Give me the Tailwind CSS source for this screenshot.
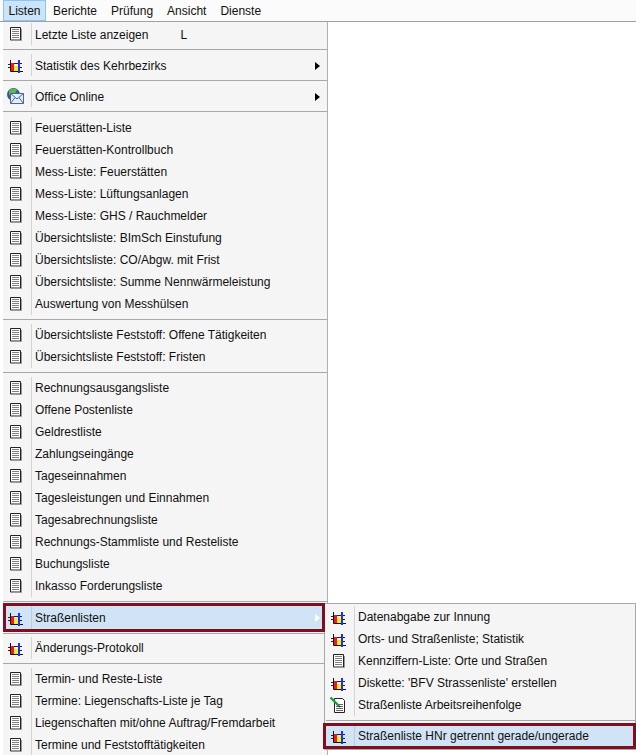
<!DOCTYPE html>
<html lang="de">
<head>
    <meta charset="UTF-8">
    <script src="https://cdn.jsdelivr.net/npm/@tailwindcss/browser@4"></script>
    <title>Listen</title>
</head>
<body class="bg-white h-[755px] w-[636px] overflow-hidden relative font-['Liberation_Sans',sans-serif] text-[12px] text-[#101010]">
    <svg class="hidden">
        <symbol id="doc" viewBox="0 0 16 16">
            <path d="M2.500 1.500h10v12.500h-10z" fill="#fff" stroke="#222"/>
            <path d="M13.500 3v11.500H4" fill="none" stroke="#999"/>
            <path d="M4 3.500h7M4 5.500h7M4 7.500h7M4 9.500h7M4 11.500h7" stroke="#808080"/>
        </symbol>
        <symbol id="chart" viewBox="0 0 16 16">
            <rect x="3" y="6" width="3" height="8" fill="#f01818"/>
            <rect x="6" y="9" width="4" height="5" fill="#f8ec20"/>
            <path d="M2.500 3v11.500H15" fill="none" stroke="#111"/>
            <path d="M0 7.500h2M0 10.500h2M6 6.500h8M10 10.500h4" fill="none" stroke="#223"/>
            <rect x="10" y="3" width="2" height="13" fill="#1c30f0"/>
        </symbol>
        <symbol id="globe" viewBox="0 0 18 16">
            <circle cx="6.500" cy="6.500" r="6.500" fill="#1f5f9c"/>
            <path d="M2 3c2-3 6-3 8-1.500l-1 3-3 1-1 2.500-3-1z" fill="#6ab04c"/>
            <path d="M3.500 5.500h13v10h-13z" fill="#e4ecf6" stroke="#4a6a90"/>
            <path d="M3.500 5.500l6.500 5.500 6.500-5.500M3.500 15.500l4.500-6M16.500 15.500l-4.500-6" fill="none" stroke="#4a6a90"/>
        </symbol>
        <symbol id="pen" viewBox="0 0 18 18">
            <path d="M5.500 2.500h8l2 2v12h-10z" fill="#fff" stroke="#222"/>
            <path d="M7 8.500h7M7 10.500h7M7 12.500h7M7 14.500h7" stroke="#666"/>
            <path d="M1.500 1.500l8 8" stroke="#1e9a3a" stroke-width="2.400"/>
            <path d="M9.500 9.500l1.500 1.500" stroke="#222" stroke-width="1.500"/>
        </symbol>
        <symbol id="arrow" viewBox="0 0 5 8">
            <path d="M0 0l5 4-5 4z"/>
        </symbol>
    </svg>

    <!-- Menüleiste -->
    <div class="h-[22px] flex items-center pl-[3px] border-b border-[#a0a0a0] bg-[#fbfbfb]">
        <div class="h-[21px] w-[43px] flex items-center justify-center bg-[#cce4f8] border border-[#90c4f0]">Listen</div>
        <div class="flex items-center h-[21px] pl-[7px] gap-[14px]">
            <span>Berichte</span><span>Prüfung</span><span>Ansicht</span><span>Dienste</span>
        </div>
    </div>

    <!-- Hauptmenü -->
    <div class="ml-[3px] w-[325px] bg-[#f5f5f5] border-r border-[#b0b0b0] pt-px">
        <div class="h-[22px] flex items-center"><svg class="w-4 h-4 ml-[5px] mr-[7px]"><use href="#doc"/></svg><div class="h-full border-l border-[#d4d4d4] pl-[3px] pt-px flex items-center">Letzte Liste anzeigen<span class="ml-[32px]">L</span></div></div>
        <div class="h-[9px] flex items-center"><div class="w-full h-px bg-[#a8a8a8]"></div></div>
        <div class="h-[22px] flex items-center"><svg class="w-4 h-4 ml-[5px] mr-[7px]"><use href="#chart"/></svg><div class="h-full flex-1 border-l border-[#d4d4d4] pl-[3px] pt-px flex items-center justify-between">Statistik des Kehrbezirks<svg class="w-[5px] h-2 mr-[7px]"><use href="#arrow"/></svg></div></div>
        <div class="h-[9px] flex items-center"><div class="w-full h-px bg-[#a8a8a8]"></div></div>
        <div class="h-[22px] flex items-center"><svg class="w-[18px] h-4 ml-[4px] mr-[6px]"><use href="#globe"/></svg><div class="h-full flex-1 border-l border-[#d4d4d4] pl-[3px] pt-px flex items-center justify-between">Office Online<svg class="w-[5px] h-2 mr-[7px]"><use href="#arrow"/></svg></div></div>
        <div class="h-[10px] pb-px flex items-center"><div class="w-full h-px bg-[#a8a8a8]"></div></div>

        <div class="h-[22px] flex items-center"><svg class="w-4 h-4 ml-[5px] mr-[7px]"><use href="#doc"/></svg><div class="h-full border-l border-[#d4d4d4] pl-[3px] flex items-center">Feuerstätten-Liste</div></div>
        <div class="h-[22px] flex items-center"><svg class="w-4 h-4 ml-[5px] mr-[7px]"><use href="#doc"/></svg><div class="h-full border-l border-[#d4d4d4] pl-[3px] flex items-center">Feuerstätten-Kontrollbuch</div></div>
        <div class="h-[22px] flex items-center"><svg class="w-4 h-4 ml-[5px] mr-[7px]"><use href="#doc"/></svg><div class="h-full border-l border-[#d4d4d4] pl-[3px] flex items-center">Mess-Liste: Feuerstätten</div></div>
        <div class="h-[22px] flex items-center"><svg class="w-4 h-4 ml-[5px] mr-[7px]"><use href="#doc"/></svg><div class="h-full border-l border-[#d4d4d4] pl-[3px] flex items-center">Mess-Liste: Lüftungsanlagen</div></div>
        <div class="h-[22px] flex items-center"><svg class="w-4 h-4 ml-[5px] mr-[7px]"><use href="#doc"/></svg><div class="h-full border-l border-[#d4d4d4] pl-[3px] flex items-center">Mess-Liste: GHS / Rauchmelder</div></div>
        <div class="h-[22px] flex items-center"><svg class="w-4 h-4 ml-[5px] mr-[7px]"><use href="#doc"/></svg><div class="h-full border-l border-[#d4d4d4] pl-[3px] flex items-center">Übersichtsliste: BImSch Einstufung</div></div>
        <div class="h-[22px] flex items-center"><svg class="w-4 h-4 ml-[5px] mr-[7px]"><use href="#doc"/></svg><div class="h-full border-l border-[#d4d4d4] pl-[3px] flex items-center">Übersichtsliste: CO/Abgw. mit Frist</div></div>
        <div class="h-[22px] flex items-center"><svg class="w-4 h-4 ml-[5px] mr-[7px]"><use href="#doc"/></svg><div class="h-full border-l border-[#d4d4d4] pl-[3px] flex items-center">Übersichtsliste: Summe Nennwärmeleistung</div></div>
        <div class="h-[22px] flex items-center"><svg class="w-4 h-4 ml-[5px] mr-[7px]"><use href="#doc"/></svg><div class="h-full border-l border-[#d4d4d4] pl-[3px] flex items-center">Auswertung von Messhülsen</div></div>
        <div class="h-[9px] pb-px flex items-center"><div class="w-full h-px bg-[#a8a8a8]"></div></div>

        <div class="h-[22px] flex items-center"><svg class="w-4 h-4 ml-[5px] mr-[7px]"><use href="#doc"/></svg><div class="h-full border-l border-[#d4d4d4] pl-[3px] flex items-center">Übersichtsliste Feststoff: Offene Tätigkeiten</div></div>
        <div class="h-[22px] flex items-center"><svg class="w-4 h-4 ml-[5px] mr-[7px]"><use href="#doc"/></svg><div class="h-full border-l border-[#d4d4d4] pl-[3px] flex items-center">Übersichtsliste Feststoff: Fristen</div></div>
        <div class="h-[9px] pb-px flex items-center"><div class="w-full h-px bg-[#a8a8a8]"></div></div>

        <div class="h-[22px] flex items-center"><svg class="w-4 h-4 ml-[5px] mr-[7px]"><use href="#doc"/></svg><div class="h-full border-l border-[#d4d4d4] pl-[3px] flex items-center">Rechnungsausgangsliste</div></div>
        <div class="h-[22px] flex items-center"><svg class="w-4 h-4 ml-[5px] mr-[7px]"><use href="#doc"/></svg><div class="h-full border-l border-[#d4d4d4] pl-[3px] flex items-center">Offene Postenliste</div></div>
        <div class="h-[22px] flex items-center"><svg class="w-4 h-4 ml-[5px] mr-[7px]"><use href="#doc"/></svg><div class="h-full border-l border-[#d4d4d4] pl-[3px] flex items-center">Geldrestliste</div></div>
        <div class="h-[22px] flex items-center"><svg class="w-4 h-4 ml-[5px] mr-[7px]"><use href="#doc"/></svg><div class="h-full border-l border-[#d4d4d4] pl-[3px] flex items-center">Zahlungseingänge</div></div>
        <div class="h-[22px] flex items-center"><svg class="w-4 h-4 ml-[5px] mr-[7px]"><use href="#doc"/></svg><div class="h-full border-l border-[#d4d4d4] pl-[3px] flex items-center">Tageseinnahmen</div></div>
        <div class="h-[22px] flex items-center"><svg class="w-4 h-4 ml-[5px] mr-[7px]"><use href="#doc"/></svg><div class="h-full border-l border-[#d4d4d4] pl-[3px] flex items-center">Tagesleistungen und Einnahmen</div></div>
        <div class="h-[22px] flex items-center"><svg class="w-4 h-4 ml-[5px] mr-[7px]"><use href="#doc"/></svg><div class="h-full border-l border-[#d4d4d4] pl-[3px] flex items-center">Tagesabrechnungsliste</div></div>
        <div class="h-[22px] flex items-center"><svg class="w-4 h-4 ml-[5px] mr-[7px]"><use href="#doc"/></svg><div class="h-full border-l border-[#d4d4d4] pl-[3px] flex items-center">Rechnungs-Stammliste und Resteliste</div></div>
        <div class="h-[22px] flex items-center"><svg class="w-4 h-4 ml-[5px] mr-[7px]"><use href="#doc"/></svg><div class="h-full border-l border-[#d4d4d4] pl-[3px] flex items-center">Buchungsliste</div></div>
        <div class="h-[22px] flex items-center"><svg class="w-4 h-4 ml-[5px] mr-[7px]"><use href="#doc"/></svg><div class="h-full border-l border-[#d4d4d4] pl-[3px] flex items-center">Inkasso Forderungsliste</div></div>
        <div class="h-[9px] pb-px flex items-center"><div class="w-full h-px bg-[#a8a8a8]"></div></div>

        <div class="h-[24px] flex items-center bg-[#d1e4f6]"><svg class="w-4 h-4 ml-[5px] mr-[7px]"><use href="#chart"/></svg><div class="h-full flex-1 border-l border-[#b8cde0] pl-[3px] pb-px flex items-center justify-between">Straßenlisten<svg class="w-[5px] h-2 mr-[7px] fill-white"><use href="#arrow"/></svg></div></div>
        <div class="h-[7px] flex items-center"><div class="w-full h-px bg-[#a8a8a8]"></div></div>
        <div class="h-[22px] flex items-center"><svg class="w-4 h-4 ml-[5px] mr-[7px]"><use href="#chart"/></svg><div class="h-full border-l border-[#d4d4d4] pl-[3px] flex items-center">Änderungs-Protokoll</div></div>
        <div class="h-[9px] pb-px flex items-center"><div class="w-full h-px bg-[#a8a8a8]"></div></div>

        <div class="h-[22px] flex items-center"><svg class="w-4 h-4 ml-[5px] mr-[7px]"><use href="#doc"/></svg><div class="h-full border-l border-[#d4d4d4] pl-[3px] flex items-center">Termin- und Reste-Liste</div></div>
        <div class="h-[22px] flex items-center"><svg class="w-4 h-4 ml-[5px] mr-[7px]"><use href="#doc"/></svg><div class="h-full border-l border-[#d4d4d4] pl-[3px] flex items-center">Termine: Liegenschafts-Liste je Tag</div></div>
        <div class="h-[22px] flex items-center"><svg class="w-4 h-4 ml-[5px] mr-[7px]"><use href="#doc"/></svg><div class="h-full border-l border-[#d4d4d4] pl-[3px] flex items-center">Liegenschaften mit/ohne Auftrag/Fremdarbeit</div></div>
        <div class="h-[22px] flex items-center"><svg class="w-4 h-4 ml-[5px] mr-[7px]"><use href="#doc"/></svg><div class="h-full border-l border-[#d4d4d4] pl-[3px] flex items-center">Termine und Feststofftätigkeiten</div></div>
    </div>

    <!-- Untermenü -->
    <div class="absolute left-[324px] top-[603px] w-[312px] h-[147px] bg-[#f5f5f5] border border-[#a8a8a8] pt-[2px] pl-px">
        <div class="h-[22px] flex items-center"><svg class="w-4 h-4 ml-[5px] mr-[7px]"><use href="#chart"/></svg><div class="h-full border-l border-[#d4d4d4] pl-[3px] flex items-center">Datenabgabe zur Innung</div></div>
        <div class="h-[22px] flex items-center"><svg class="w-4 h-4 ml-[5px] mr-[7px]"><use href="#chart"/></svg><div class="h-full border-l border-[#d4d4d4] pl-[3px] flex items-center">Orts- und Straßenliste; Statistik</div></div>
        <div class="h-[22px] flex items-center"><svg class="w-4 h-4 ml-[5px] mr-[7px]"><use href="#doc"/></svg><div class="h-full border-l border-[#d4d4d4] pl-[3px] flex items-center">Kennziffern-Liste: Orte und Straßen</div></div>
        <div class="h-[22px] flex items-center"><svg class="w-4 h-4 ml-[5px] mr-[7px]"><use href="#chart"/></svg><div class="h-full border-l border-[#d4d4d4] pl-[3px] flex items-center">Diskette: 'BFV Strassenliste' erstellen</div></div>
        <div class="h-[22px] flex items-center"><svg class="w-[18px] h-[18px] ml-[3px] mr-[7px]"><use href="#pen"/></svg><div class="h-full border-l border-[#d4d4d4] pl-[3px] flex items-center">Straßenliste Arbeitsreihenfolge</div></div>
        <div class="h-[8px] flex items-center"><div class="w-full h-px bg-[#a8a8a8]"></div></div>
        <div class="h-[24px] flex items-center bg-[#d1e4f6]"><svg class="w-4 h-4 ml-[5px] mr-[7px]"><use href="#chart"/></svg><div class="h-full border-l border-[#b8cde0] pl-[3px] flex items-center">Straßenliste HNr getrennt gerade/ungerade</div></div>
    </div>

    <!-- rote Markierungen -->
    <div class="absolute left-[3px] top-[603px] w-[322px] h-[29px] border-[3px] border-[#7f0f1f]"></div>
    <div class="absolute left-[323px] top-[723px] w-[313px] h-[26px] border-[3px] border-[#7f0f1f]"></div>
</body>
</html>
